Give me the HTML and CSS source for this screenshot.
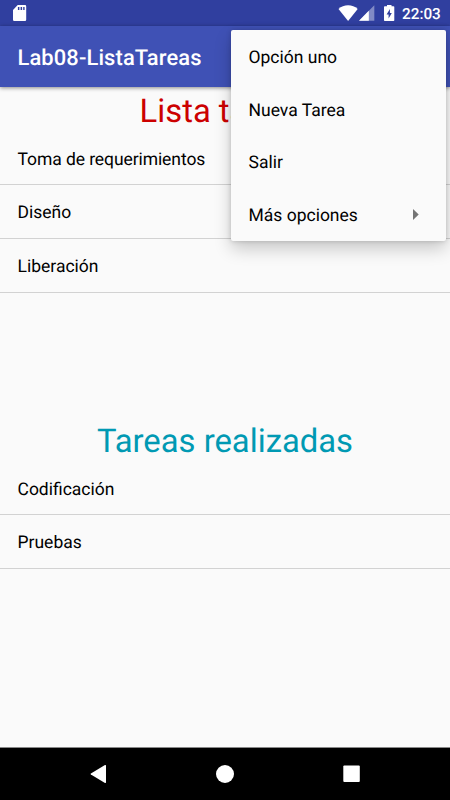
FILE: index.html
```html
<!DOCTYPE html>
<html lang="es">
<head>
<meta charset="utf-8">
<title>Lab08-ListaTareas</title>
<link rel="stylesheet" href="styles.css">
</head>
<body>
<div class="screen">
  <div class="status-bar">
    <svg class="sd" width="14" height="17" viewBox="0 0 14 17"><path fill="#fff" fill-rule="evenodd" d="M4.700 0H12Q13.200 0 13.200 1.200V14.800Q13.200 16 12 16H1.200Q0 16 0 14.800V5ZM4.900 2V5H6.400V2ZM7.600 2V5H9.100V2ZM10.200 2V5H11.600V2Z"/></svg>
    <svg class="wifi" width="20" height="17" viewBox="0 0 20 17"><path fill="#fff" d="M.5 3.900Q4.600 .2 10.100 .2T19.700 3.900L10.100 16Z"/></svg>
    <svg class="signal" width="16" height="16" viewBox="0 0 16 16"><path fill="#fff" fill-opacity=".4" d="M0 15.700L15.300 .3V15.700Z"/><path fill="#fff" d="M0 15.700L9.800 5.800V15.700Z"/></svg>
    <svg class="battery" width="11" height="17" viewBox="0 0 11 17"><path fill="#fff" fill-rule="evenodd" d="M3 0H7.500V1.300H9.500Q10.300 1.300 10.300 2.100V15.200Q10.300 16 9.500 16H.8Q0 16 0 15.200V2.100Q0 1.300 .8 1.300H3ZM5.900 4L2.600 9.400H4.600V13.500L7.800 8H5.900Z"/></svg>
    <span class="clock">22:03</span>
  </div>
  <header class="app-bar">Lab08-ListaTareas</header>
  <main class="content">
    <section class="pending">
      <h1 class="heading red">Lista tareas</h1>
      <ul class="list">
        <li class="tight">Toma de requerimientos</li>
        <li>Diseño</li>
        <li>Liberación</li>
      </ul>
    </section>
    <section>
      <h1 class="heading teal">Tareas realizadas</h1>
      <ul class="list">
        <li>Codificación</li>
        <li>Pruebas</li>
      </ul>
    </section>
  </main>
  <nav class="nav-bar">
    <svg width="18" height="20" viewBox="0 0 18 20"><path fill="#fff" d="M15 1.100Q16 .7 16 1.700V18.300Q16 19.300 15 18.900L.9 10.600Q.1 10 .9 9.400Z"/></svg>
    <svg width="18" height="18" viewBox="0 0 18 18"><circle cx="9" cy="9" r="9" fill="#fff"/></svg>
    <svg width="18" height="18" viewBox="0 0 18 18"><rect x="1.300" y=".5" width="16.500" height="16.500" rx="1" fill="#fff"/></svg>
  </nav>
  <div class="menu">
    <div class="menu-item">Opción uno</div>
    <div class="menu-item">Nueva Tarea</div>
    <div class="menu-item">Salir</div>
    <div class="menu-item">Más opciones <svg class="arrow" width="6" height="11" viewBox="0 0 6 11"><path fill="#757575" d="M0 0L5.700 5.500L0 11Z"/></svg></div>
  </div>
</div>
</body>
</html>
```
FILE: styles.css
```css
* { box-sizing: border-box; }
body { margin: 0; font-family: Roboto, sans-serif; text-rendering: geometricPrecision; }
.screen {
  position: relative;
  display: flex;
  flex-direction: column;
  width: 450px;
  height: 800px;
  overflow: hidden;
  background: #fafafa;
}
svg { display: block; flex: none; }
.status-bar {
  display: flex;
  align-items: flex-start;
  height: 26px;
  padding: 5px 9px 0 13px;
  background: #303f9f;
  color: #fff;
}
.wifi { margin-left: auto; }
.signal { margin-left: 1px; }
.battery { margin-left: 9px; }
.clock {
  width: 39px;
  margin-left: 7px;
  font-size: 15.300px;
  font-weight: 500;
  line-height: 18px;
  white-space: nowrap;
}
.app-bar {
  z-index: 1;
  height: 61px;
  padding-left: 17.500px;
  background: #3f51b5;
  box-shadow: 0 1px 4px rgba(0, 0, 0, .45);
  color: #fff;
  font-size: 21.900px;
  font-weight: 500;
  letter-spacing: .12px;
  line-height: 65px;
}
.content { flex: 1; padding-top: 2px; }
.pending { height: 330px; }
.heading {
  margin: 0;
  height: 42.500px;
  font-size: 32.800px;
  font-weight: 400;
  line-height: 46px;
  text-align: center;
}
.red { color: #c00; }
.teal { color: #0099b3; }
.list { margin: 0; padding: 0; list-style: none; }
.list li {
  height: 53.800px;
  padding-left: 17.500px;
  border-bottom: 1px solid #d2d2d2;
  font-size: 17.500px;
  line-height: 56px;
}
.list .tight { letter-spacing: -.08px; }
.nav-bar {
  display: flex;
  align-items: center;
  justify-content: space-between;
  height: 53px;
  padding: 0 90px;
  border-top: 1px solid #888;
  background: #000;
}
.menu {
  position: absolute;
  z-index: 2;
  top: 30px;
  left: 231px;
  width: 215px;
  height: 210.500px;
  border-radius: 2px;
  background: #fafafa;
  box-shadow: 0 8px 17px rgba(0, 0, 0, .2), 0 0 5px rgba(0, 0, 0, .18);
}
.menu-item {
  display: flex;
  align-items: center;
  justify-content: space-between;
  height: 52.500px;
  padding: 4px 27px 0 17.500px;
  font-size: 17.500px;
}
.arrow { margin-bottom: 3px; }
```
